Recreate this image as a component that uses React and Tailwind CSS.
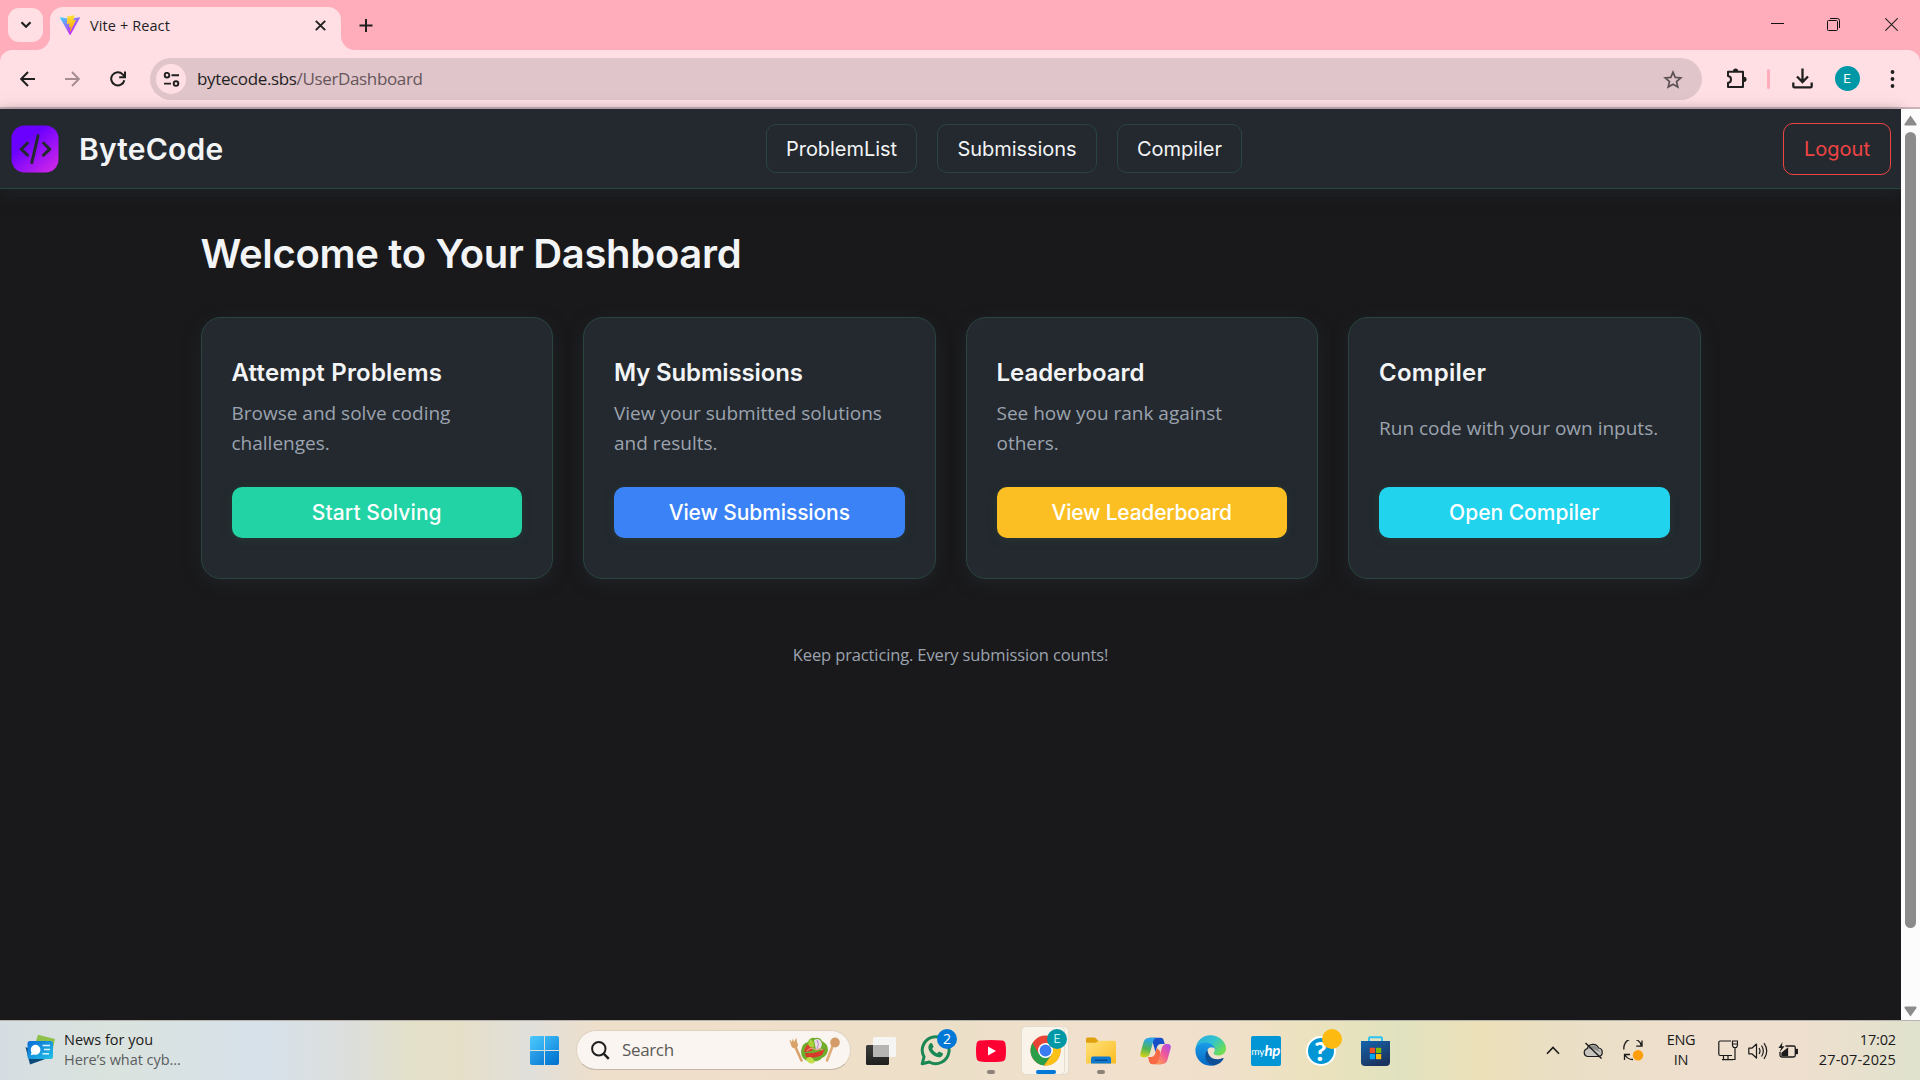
import React from "react";

const UI = "font-['Open_Sans','Noto_Sans',sans-serif]";
const HEAD = "font-['Inter','Open_Sans',sans-serif]";

const navLinks = [
  { label: "ProblemList", cls: "w-[151px]" },
  { label: "Submissions", cls: "w-[160px]" },
  { label: "Compiler", cls: "w-[125px]" },
];

const cards = [
  { title: "Attempt Problems", titleCls: "tracking-[0.2px]", lines: ["Browse and solve coding", "challenges."], action: "Start Solving", color: "bg-[#22d3a5] tracking-[0.1px]" },
  { title: "My Submissions", titleCls: "tracking-[-0.15px]", lines: ["View your submitted solutions", "and results."], action: "View Submissions", color: "bg-[#3b82f6] tracking-[-0.1px]" },
  { title: "Leaderboard", titleCls: "tracking-[-0.05px]", lines: ["See how you rank against", "others."], action: "View Leaderboard", color: "bg-[#fbbf24] tracking-[-0.22px]" },
  { title: "Compiler", titleCls: "tracking-[0.25px]", lines: ["Run code with your own inputs."], action: "Open Compiler", color: "bg-[#22d3ee]" },
];

function ViteIcon() {
  return (
    <svg width="20" height="20" viewBox="0 0 256 257">
      <defs>
        <linearGradient id="va" x1="-.8%" x2="57.6%" y1="7.7%" y2="78.4%"><stop offset="0" stopColor="#41D1FF" /><stop offset="1" stopColor="#BD34FE" /></linearGradient>
        <linearGradient id="vb" x1="43.4%" x2="50.3%" y1="2.2%" y2="89%"><stop offset="0" stopColor="#FFEA83" /><stop offset=".083" stopColor="#FFDD35" /><stop offset="1" stopColor="#FFA800" /></linearGradient>
      </defs>
      <path fill="url(#va)" d="M255.153 37.938L134.897 252.976c-2.483 4.44-8.862 4.466-11.382.048L.875 37.958c-2.746-4.814 1.371-10.646 6.827-9.67l120.385 21.517a6.537 6.537 0 0 0 2.322-.004l117.867-21.483c5.438-.991 9.574 4.796 6.877 9.62Z" />
      <path fill="url(#vb)" d="M185.432.063L96.44 17.501a3.268 3.268 0 0 0-2.634 3.014l-5.474 92.456a3.268 3.268 0 0 0 3.997 3.378l24.777-5.718c2.318-.535 4.413 1.507 3.936 3.838l-7.361 36.047c-.495 2.426 1.782 4.5 4.151 3.78l15.304-4.649c2.372-.72 4.652 1.36 4.15 3.788l-11.698 56.621c-.732 3.542 3.979 5.473 5.943 2.437l1.313-2.028l72.516-144.72c1.215-2.423-.88-5.186-3.54-4.672l-25.505 4.922c-2.396.462-4.435-1.77-3.759-4.114l16.646-57.705c.677-2.35-1.37-4.583-3.769-4.113Z" />
    </svg>
  );
}

function TabStrip() {
  return (
    <div className="flex h-[50px] bg-[#ffadbb] pl-2">
      <button className="mt-2 flex h-[34px] w-[35px] items-center justify-center rounded-[11px] bg-[#ffdfe4]">
        <svg width="12" height="8" viewBox="0 0 12 8" fill="none" stroke="#1f1f1f" strokeWidth="2.2"><path d="M1.5 1.2 6 5.7l4.5-4.5" /></svg>
      </button>
      <svg className="ml-[-7px] mt-[36px] shrink-0" width="14" height="14"><path d="M0 14A14 14 0 0 0 14 0V14Z" fill="#ffdfe4" /></svg>
      <div className="mt-[7px] flex h-[43px] w-[291px] items-start rounded-t-[13px] bg-[#ffdfe4] pl-[10px] pt-2">
        <ViteIcon />
        <span className={`${UI} ml-[10px] mt-[1px] h-5 text-[14.5px] leading-[20px] tracking-[0.1px] text-[#1f1f1f]`}>Vite + React</span>
        <svg className="ml-auto mr-[15px] mt-[5px]" width="11" height="11" viewBox="0 0 11 11" stroke="#1f1f1f" strokeWidth="1.9"><path d="m.8.8 9.4 9.4M10.2.8.8 10.2" /></svg>
      </div>
      <svg className="mt-[36px] shrink-0" width="14" height="14"><path d="M0 0A14 14 0 0 0 14 14H0Z" fill="#ffdfe4" /></svg>
      <svg className="ml-[4px] mt-[19px] shrink-0" width="14" height="13" viewBox="0 0 14 13" stroke="#1f1f1f" strokeWidth="2"><path d="M7 0v13M.5 6.5h13" /></svg>
      <div className="ml-auto mt-[18px] flex pr-[22px]">
        <svg width="13" height="13" viewBox="0 0 13 13" stroke="#111"><path d="M0 5.5h13" /></svg>
        <svg className="ml-[43px]" width="13" height="13" viewBox="0 0 13 13" fill="none" stroke="#111"><rect x=".5" y="2.5" width="10" height="10" rx="1" /><path d="M3 .5h7.5a2 2 0 0 1 2 2V10" /></svg>
        <svg className="ml-[45px]" width="13" height="13" viewBox="0 0 13 13" stroke="#222" strokeWidth="1.1"><path d="m.3.3 12.4 12.4M12.7.3.3 12.7" /></svg>
      </div>
    </div>
  );
}

function Toolbar() {
  return (
    <div className="h-[57px] bg-[#ffadbb]">
      <div className="flex h-[57px] items-center rounded-t-[12px] bg-[#ffdfe4] pl-5">
        <svg width="15" height="16" viewBox="0 0 15 16" fill="none" stroke="#1f1f1f" strokeWidth="2"><path d="M15 8H1.5M8 1 1.2 8 8 15" /></svg>
        <svg className="ml-[30px]" width="15" height="16" viewBox="0 0 15 16" fill="none" stroke="#a58d92" strokeWidth="1.9"><path d="M0 8h13.5M7 1l6.8 7L7 15" /></svg>
        <svg className="ml-[30px]" width="16" height="16" viewBox="0 0 16 16" fill="none" stroke="#1f1f1f" strokeWidth="2"><path d="M14.3 9.2A6.6 6.600 0 1 1 12.700 3.400L14.600 5.600" /><path d="M15 .4v5.900H9.200" /></svg>
        <div className="ml-[24px] mt-[1px] flex h-[42px] w-[1552px] items-center rounded-full bg-[#e0c5ca] pl-[6px] pr-[19px]">
          <div className="flex size-[30px] items-center justify-center rounded-full bg-[#ffdfe4]">
            <svg width="17" height="15" viewBox="0 0 17 15" fill="none" stroke="#1f1f1f" strokeWidth="1.9"><circle cx="4" cy="3.2" r="2.3" /><path d="M8.500 3.200H16M1 11.600H8" /><circle cx="13" cy="11.600" r="2.300" /></svg>
          </div>
          <span className={`${UI} ml-[11px] text-[17px] leading-[24px] tracking-[-0.36px] text-[#1f1f1f]`}>bytecode.sbs<span className="text-[#66565a]">/UserDashboard</span></span>
          <svg className="ml-auto" width="20" height="19" viewBox="0 0 20 19" fill="none" stroke="#5d5255" strokeWidth="1.700"><path d="m10 2.200 2.200 5.200 5.600.5-4.300 3.700 1.300 5.500-4.800-2.900-4.800 2.900 1.300-5.500L2.200 7.900l5.600-.5Z" /></svg>
        </div>
        <svg className="ml-[24px]" width="21" height="21" viewBox="0 0 21 21" fill="none" stroke="#1f1f1f" strokeWidth="2"><path d="M2 3.800h15v15.200H2v-4.200c4-.3 4-6.500 0-6.800Z" strokeLinejoin="round" /><path d="M7 3a2.600 2.600 0 0 1 5.200 0ZM18 8.700a2.600 2.600 0 0 1 0 5.200Z" fill="#1f1f1f" stroke="none" /></svg>
        <div className="ml-[20px] h-5 w-[2.5px] rounded bg-[#ffadbb]" />
        <svg className="ml-[22px]" width="21" height="21" viewBox="0 0 21 21" fill="none" stroke="#1f1f1f" strokeWidth="2.300"><path d="M10.500.5v13M5 8.500l5.500 5.500L16 8.500M1.300 14.500v3.700q0 1.200 1.200 1.200h16q1.200 0 1.200-1.200v-3.700" /></svg>
        <div className="ml-[22px] flex size-[25px] items-center justify-center rounded-full bg-[#0097a7] font-['Roboto',sans-serif] text-[13px] text-white">E</div>
        <svg className="ml-[30px]" width="5" height="18" viewBox="0 0 5 18" fill="#1f1f1f"><circle cx="2.500" cy="2" r="1.900" /><circle cx="2.500" cy="9" r="1.900" /><circle cx="2.500" cy="16" r="1.900" /></svg>
      </div>
    </div>
  );
}

function SiteNav() {
  return (
    <nav className="flex h-[80px] shrink-0 items-center border-b border-[#294540] bg-[#23292e] pl-[11px] pr-[10px] shadow-[0_4px_14px_rgba(35,41,46,0.6)]">
      <div className="flex w-[755px] shrink-0 items-center">
        <svg width="48" height="48" viewBox="0 0 48 48" fill="none">
          <defs><linearGradient id="lg" x1="8" y1="4" x2="44" y2="46" gradientUnits="userSpaceOnUse"><stop offset=".25" stopColor="#6a00ff" /><stop offset="1" stopColor="#d226e8" /></linearGradient></defs>
          <rect x=".500" y=".500" width="47" height="47" rx="13" fill="url(#lg)" />
          <path d="m16.500 18-6.300 6.200 6.300 6M32.500 18l6.300 6.200-6.300 6M27 10.800l-6.200 26.800" stroke="#23292e" strokeWidth="3" strokeLinecap="round" strokeLinejoin="round" />
        </svg>
        <span className={`${HEAD} ml-[20px] text-[30px] font-semibold leading-[40px] tracking-[0.2px] text-[#f3f4f6]`}>ByteCode</span>
      </div>
      <div className="flex shrink-0 gap-[20px]">
        {navLinks.map((l) => (
          <a key={l.label} className={`${HEAD} ${l.cls} flex h-[49px] items-center justify-center rounded-[10px] border border-[#294540] text-[20px] tracking-[-0.05px] text-[#f3f4f6]`}>{l.label}</a>
        ))}
      </div>
      <a className={`${HEAD} ml-auto flex h-[52px] w-[108px] items-center justify-center rounded-[10px] border border-[#ef4444] text-[20px] text-[#ef4444]`}>Logout</a>
    </nav>
  );
}

function Card({ card }) {
  return (
    <div className="flex h-[262px] flex-col rounded-[20px] border border-[#294540] bg-[#23292e] px-[30px] shadow-[0_4px_16px_rgba(35,41,46,0.6)]">
      <h2 className={`${HEAD} ${card.titleCls} mt-[39px] text-[24px] font-semibold leading-[32px] text-[#f3f4f6]`}>{card.title}</h2>
      <div className={`${UI} mt-[9px] flex h-[60px] flex-col justify-center text-[19px] leading-[30px] text-[#9ca3af]`}>
        {card.lines.map((l) => <p key={l} className="whitespace-nowrap">{l}</p>)}
      </div>
      <button className={`${HEAD} ${card.color} mt-[29px] h-[51px] shrink-0 rounded-[10px] text-[21px] font-medium text-white shadow-[0_2px_8px_rgba(41,69,64,0.5)]`}>{card.action}</button>
    </div>
  );
}

function Scrollbar() {
  return (
    <div className="flex w-[19px] flex-col items-center bg-[#fcfcfc]">
      <svg className="mt-[6px]" width="13" height="11"><path d="M6.500.5 12.500 9q.3 1.500-1 1.500h-10Q0 10.500.5 9Z" fill="#8b8b8b" /></svg>
      <div className="mt-[6px] h-[796px] w-[11px] rounded-full bg-[#8b8b8b]" />
      <svg className="mb-[3px] mt-auto" width="13" height="11"><path d="M6.500 10.500 12.500 2q.3-1.500-1-1.500h-10Q0 .5.500 2Z" fill="#8b8b8b" /></svg>
    </div>
  );
}

function Slot({ children, dot }) {
  return (
    <div className="relative flex h-full w-[55px] items-center justify-center">
      {children}
      {dot && <span className="absolute bottom-[6px] h-[4px] w-[8px] rounded-full bg-[#8b8378]" />}
    </div>
  );
}

function TaskIcons() {
  return (
    <div className="ml-[2px] flex h-full">
      <Slot>
        <svg width="30" height="28" viewBox="0 0 30 28"><defs><linearGradient id="tv" x1="0" y1="0" x2="0" y2="1"><stop stopColor="#3c3c3a" /><stop offset="1" stopColor="#1f1f1f" /></linearGradient></defs><rect y="8" width="23" height="20" rx="1.500" fill="url(#tv)" /><rect x="7" y="0" width="23" height="20" rx="1.500" fill="#f5f5f5" fillOpacity=".95" /><path d="M7 8h16v12H8.500Q7 20 7 18.500Z" fill="#b6b5b4" /></svg>
      </Slot>
      <Slot>
        <svg width="31" height="31" viewBox="0 0 31 31" fill="none"><path d="M2.200 28.800 4 21.800A13.400 13.400 0 1 1 9.300 27Z" stroke="#1a8755" strokeWidth="3" strokeLinejoin="round" /><path d="M10.200 8.300c.7-.7 1.700-.5 2.100.4l1.100 2.500c.2.600 0 1-.3 1.400l-.9 1.100c1 2.100 2.700 3.700 5 4.700l1.100-1.300c.4-.5.9-.5 1.400-.3l2.500 1.200c.7.400.9.900.6 1.800-.5 1.900-2.600 2.800-4.400 2.500-5.300-.9-9.400-5-10-9.200-.2-1.800.6-3.600 1.800-4.800Z" fill="#1a8755" /></svg>
        <span className={`${UI} absolute right-[6px] top-[8px] flex size-[20px] items-center justify-center rounded-full bg-[#0078d7] text-[14px] leading-none text-white`}>2</span>
      </Slot>
      <Slot dot>
        <svg width="30" height="22" viewBox="0 0 30 22"><path d="M4 .6Q15-.5 26 .6 29 1 29.500 4q1 7 0 14-.5 3-3.500 3.400-11 1.100-22 0Q1 21 .5 18q-1-7 0-14Q1 1 4 .6Z" fill="#ff0033" /><path d="m12 6.500 8 4.500-8 4.500Z" fill="#fff" /></svg>
      </Slot>
      <Slot>
        <div className="absolute left-[3px] top-[5px] h-[49px] w-[48px] rounded-[5px] border border-[#e4dccf] bg-[#f8f1e6]" />
        <div className="absolute left-[3px] top-[5px] h-[49px] w-[44px] rounded-[5px] border border-[#e4dccf] bg-[#f9f3e9]" />
        <svg className="relative" width="31" height="31" viewBox="0 0 31 31"><circle cx="15.500" cy="15.500" r="15" fill="#ea4335" /><path d="M2.500 8A15 15 0 0 0 14 30.450L22 19.300H9Z" fill="#2b9e48" /><path d="M14 30.450A15 15 0 0 0 28.500 8H15.500l6.500 11.300Z" fill="#fbc116" /><circle cx="15.500" cy="15.500" r="7.500" fill="#fff" /><circle cx="15.500" cy="15.500" r="5.900" fill="#3a7df0" /></svg>
        <span className="absolute left-[29px] top-[8px] flex size-[20px] items-center justify-center rounded-full bg-[#0097a7] font-['Roboto',sans-serif] text-[12px] leading-none text-[#c4f0ef]">E</span>
        <span className="absolute bottom-[6px] left-[18px] h-[4px] w-[20px] rounded-full bg-[#0078d7]" />
      </Slot>
      <Slot dot>
        <svg width="30" height="27" viewBox="0 0 30 27"><defs><linearGradient id="fo" x1="0" y1="0" x2="1" y2="1"><stop stopColor="#ffe07a" /><stop offset="1" stopColor="#fbbd23" /></linearGradient></defs><path d="M0 2Q0 .5 1.500.5H9L12.500 4V9H0Z" fill="#dfa10c" /><path d="M0 5.800h9.500L13 3.800H28.500q1.500 0 1.500 1.500V26.500H0Z" fill="url(#fo)" /><path d="M5 26.500V21.500Q5 19.500 7 19.500H23q2 0 2 2v5Z" fill="#0f79d0" /><rect x="8.500" y="22.500" width="13" height="1.500" rx=".7" fill="#0a4f90" /></svg>
      </Slot>
      <Slot>
        <svg width="31" height="28" viewBox="0 0 31 28"><defs><linearGradient id="c1" x1=".2" y1="0" x2="0" y2="1"><stop stopColor="#2aa5ec" /><stop offset=".5" stopColor="#52b455" /><stop offset="1" stopColor="#e6d510" /></linearGradient><linearGradient id="c2" x1="1" y1="0" x2=".2" y2="1"><stop stopColor="#a74bf0" /><stop offset=".5" stopColor="#ee569a" /><stop offset="1" stopColor="#ff9a55" /></linearGradient></defs><path d="M10 .8H21q1.800 0 2.400 1.800L24.800 7H21q-3 0-4 3l-1.500 5L12 3Z" fill="#174fc8" /><path d="M21 27.300H12.500q-2.500 0-3.200-2.300L8 20h3q3 0 4-3l2-6 3 3Z" fill="#f86a45" /><path d="M10 .8h6q-2 .8-2.700 3.300L10 16q-1 4-4.500 4.200H3Q-.5 20 .500 16L3.600 5Q5 .8 10 .8Z" fill="url(#c1)" /><path d="M21 27.300h-5.500q2-.8 2.700-3.300L21.500 12q1-4.500 4.500-5h2q3.500.5 2.600 4.500L27.400 23Q26 27.300 21 27.300Z" fill="url(#c2)" /></svg>
      </Slot>
      <Slot>
        <svg width="31" height="31" viewBox="0 0 31 31"><defs><linearGradient id="e1" x1="0" y1="0" x2="1" y2=".6"><stop stopColor="#2aa8e0" /><stop offset=".55" stopColor="#32c3cf" /><stop offset="1" stopColor="#6ede53" /></linearGradient><linearGradient id="e2" x1="0" y1="0" x2="0" y2="1"><stop stopColor="#1c9de8" /><stop offset="1" stopColor="#0668c4" /></linearGradient></defs><path d="M.5 15C1 6 7.500.3 15.500.3 24.500.3 31 7 31 13.500c0 4-3 7-7.500 7-3.500 0-5-1.200-5-2.200 0-.8 1.300-1.500 1.300-3.500C19.800 11 15 9 11 9 5 9 1.500 12 .5 15Z" fill="url(#e1)" /><path d="M.4 15.500C.5 10.500 5 7.500 10 7.500c6 0 9.800 3.600 9.800 7.300 0-2-4.500-4.300-7.300 0C9 20 12 29 20 30 9 33 .4 25 .4 15.500Z" fill="url(#e2)" /><path d="M12.500 14.800C8 20 11 29 18 30.500c5-.2 9-3.500 10.500-6.700.4-.8-.2-1-.8-.7-6.500 3-14.700.5-15.200-8.300Z" fill="#0f4f96" /></svg>
      </Slot>
      <Slot>
        <div className="flex h-[30px] w-[30px] items-center justify-center rounded-[2px] bg-[#0096d6] font-['Lato',sans-serif] leading-none text-white"><span className="text-[10px]">my</span><span className="text-[15px] font-bold italic tracking-[-0.5px]">hp</span></div>
      </Slot>
      <Slot>
        <div className="flex size-[30px] items-center justify-center rounded-full border-2 border-white bg-[#0096d6] font-['Lato',sans-serif] text-[27px] font-black leading-none text-white">?</div>
        <span className="absolute left-[29px] top-[8px] size-[20px] rounded-full bg-[#fdbb12]" />
      </Slot>
      <Slot>
        <svg width="29" height="30" viewBox="0 0 29 30"><defs><linearGradient id="st" x1="0" y1="0" x2="0.5" y2="1"><stop stopColor="#1564ae" /><stop offset="1" stopColor="#1b345f" /></linearGradient></defs><path d="M8 6V2.500Q8 1.300 9.200 1.300H19.800Q21 1.300 21 2.500V6" stroke="#2cc3f2" strokeWidth="2" fill="none" /><path d="M0 5H29V26q0 4-4 4H4q-4 0-4-4Z" fill="url(#st)" /><path d="M8.800 11.800h5.200V17H8.800Z" fill="#f25022" /><path d="M15 11.800h5.200V17H15Z" fill="#7fba00" /><path d="M8.800 18h5.200v5.200H8.800Z" fill="#00a4ef" /><path d="M15 18h5.200v5.200H15Z" fill="#ffb900" /></svg>
      </Slot>
    </div>
  );
}

function Salad() {
  return (
    <svg width="51" height="27" viewBox="0 0 51 27">
      <path d="M5.500 8 12.500 23.500" stroke="#d9a26b" strokeWidth="2.600" strokeLinecap="round" /><path d="M.5 3q2-.5 2 2.500L4 1.500l1 3.500L7.500.8 8 5q2.500 4-1 6-4 1-5-3Z" fill="#d9a26b" />
      <path d="M44 8 38 23.500" stroke="#e0ac77" strokeWidth="2.600" strokeLinecap="round" /><ellipse cx="46" cy="5.500" rx="4.800" ry="5" fill="#d39c68" />
      <path d="M12 14q1-8 7-9 2-5 7-4 5-1 7 3 6 3 6 9-1 6-6 8-3 4-7 3-3 4-7 0-7-2-7-10Z" fill="#6fae2b" />
      <path d="M15 15q1-9 9-9l-1 8Z" fill="#de4030" /><path d="M17 20q9 2 16-2l3-6q-9 5-20 4Z" fill="#d83a2b" /><path d="M25 3q6-3 8 4-1 6-6 6Z" fill="#eadbe8" /><path d="M28 3q3 4 0 9" stroke="#b78ac0" fill="none" /><path d="M17 22q5-5 9 3-4 3-7 0Z" fill="#c1de48" /><path d="M21 2q5 2 4 8-4 2-6-3Z" fill="#a9d13a" /><path d="M18 14q4-5 9-1 4-3 7 0" stroke="#f5a08a" fill="none" />
    </svg>
  );
}

function Taskbar() {
  return (
    <div className="flex h-[60px] items-center border-t border-[#b9b3ad] bg-[linear-gradient(90deg,#d5dde2_0px,#dbe3de_110px,#d6e1ea_260px,#dcdedc_350px,#e3e0c9_410px,#e5dfc8_460px,#e1dfdb_530px,#eedfca_600px,#f0dfca_750px,#ecdfc8_960px,#f0e0cd_1080px,#f0e0cb_1220px,#ebe2bd_1320px,#e0e2bf_1400px,#ece0b8_1480px,#eadfc5_1560px,#eedfce_1690px,#efdfce_1800px,#dfe2cd_1920px)]">
      <div className="flex w-[530px] shrink-0 items-center pl-[25px]">
        <svg className="mt-[-2px]" width="30" height="31" viewBox="0 0 30 31"><defs><linearGradient id="nw" x1="0" y1="0" x2="1" y2="1"><stop stopColor="#0a6bd6" /><stop offset="1" stopColor="#22c1e6" /></linearGradient></defs><path d="M13 .8 30 5 28 14 10 10Z" fill="#8fc14a" /><path d="M.5 13 5 30.500 23 24Z" fill="#0b4a78" /><rect x="2.500" y="7" width="25.500" height="18" rx="2.500" fill="url(#nw)" /><path d="M10.500 10.800a5 5 0 1 1-2 9.600l-2.700.8.700-2.800a5 5 0 0 1 4-7.600Z" fill="#fff" /><path d="M17.500 11.500H25M19 15.500h6M17.500 19.800H24" stroke="#d8f4ff" strokeWidth="1.500" /></svg>
        <div className={`${UI} ml-[9px] mt-[-2px] text-[14.5px] leading-[20px]`}>
          <p className="text-[#1a1a1a]">News for you</p>
          <p className="tracking-[-0.05px] text-[#5a5d5e]">Here’s what cyb...</p>
        </div>
      </div>
      <div className="grid size-[29px] shrink-0 grid-cols-2 gap-[1px] overflow-hidden rounded-[2px]">
        <i className="bg-linear-to-br from-[#4cc8fb] to-[#2aa8ee]" /><i className="bg-linear-to-br from-[#3bb6f3] to-[#1690e2]" /><i className="bg-linear-to-br from-[#2fa4ea] to-[#0c80d8]" /><i className="bg-linear-to-br from-[#1690e0] to-[#0270cf]" />
      </div>
      <div className="ml-[17px] mt-[-1px] flex h-[40px] w-[275px] shrink-0 items-center rounded-full border border-[#e0d2c1] border-b-[#c5b6a8] bg-[#faf5f0] pl-[14px] pr-[10px]">
        <svg width="19" height="19" viewBox="0 0 19 19" fill="none" stroke="#1f1f1f"><circle cx="7.800" cy="7.800" r="6.700" strokeWidth="2" /><path d="m12.600 12.600 5.200 5.200" strokeWidth="2.400" /></svg>
        <span className={`${UI} ml-[12px] text-[17px] tracking-[-0.35px] text-[#5c5a57]`}>Search</span>
        <span className="ml-auto"><Salad /></span>
      </div>
      <TaskIcons />
      <div className="ml-auto flex items-center pr-[24px] text-[#1a1a1a]">
        <svg width="14" height="9" viewBox="0 0 14 9" fill="none" stroke="#1a1a1a" strokeWidth="1.600"><path d="M1 7.800 7 1.500l6 6.300" /></svg>
        <svg className="ml-[23px]" width="20" height="17" viewBox="0 0 20 17"><path d="M4.500 14.500a4 4 0 0 1-.3-7.800A6 6 0 0 1 15.500 6a4.300 4.300 0 0 1 .2 8.500Z" fill="#c7c4bf" stroke="#1a1a1a" strokeWidth="1.200" /><path d="M5 7A5.500 5.500 0 0 1 15 7l3 4Q9 5 5 7Z" fill="#8e8c88" /><path d="m2.500 1 16 15.500" stroke="#1a1a1a" strokeWidth="1.400" /></svg>
        <svg className="ml-[20px]" width="21" height="21" viewBox="0 0 21 21" fill="none" stroke="#1a1a1a" strokeWidth="1.300"><path d="M1 9.500A8.800 8.800 0 0 1 18.500 6M19 .5v5.700h-5.800M10 19.500A9 9 0 0 1 2 15M1.500 20v-5.500H7" /><circle cx="15" cy="15.200" r="5.200" fill="#ff9d0a" stroke="none" /></svg>
        <div className={`${UI} ml-[22px] mt-[-2px] w-[30px] text-center text-[14.5px] leading-[20px] tracking-[-0.3px]`}><p>ENG</p><p>IN</p></div>
        <svg className="ml-[22px]" width="20" height="21" viewBox="0 0 20 21" fill="none" stroke="#1a1a1a" strokeWidth="1.200"><path d="M13 1H2.200Q.8 1 .8 2.500V14Q.8 15.500 2.200 15.500H14M5.500 15.500v4M10 15.500v4M4 19.600h11M14.500 1h5v4.500l-1 2h-3l-1-2ZM17 8v11.500h-2.500M14.500 4h5" /></svg>
        <svg className="ml-[10px]" width="20" height="18" viewBox="0 0 20 18" fill="none" stroke="#1a1a1a" strokeWidth="1.200"><path d="M.8 6.200v5.600h3L8.500 16V2L3.800 6.200Z" strokeLinejoin="round" /><path d="M11 6q2 3 0 6M13.500 3.500q3.700 5.500 0 11M16 1.200q5.500 7.800 0 15.600" /></svg>
        <svg className="ml-[10px]" width="20" height="17" viewBox="0 0 20 17" fill="none" stroke="#1a1a1a" strokeWidth="1.300"><path d="M7.500 4H15.500Q17.300 4 17.300 5.800v7.400q0 1.800-1.800 1.800H3.800Q2 15 2 13.200V10" /><path d="M18 7.500h1.300v4H18Z" fill="#1a1a1a" /><path d="M4 13.300V11L9.500 6.500v6.800Z" fill="#1a1a1a" /><path d="M4.500 0 .5 6h2.700L1.500 10.500 6.500 4.300H3.800Z" fill="#1a1a1a" stroke="none" /></svg>
        <div className={`${UI} ml-[20px] mt-[-2px] w-[78px] whitespace-nowrap text-right text-[14.5px] leading-[20px]`}><p className="tracking-[-0.15px]">17:02</p><p className="tracking-[0.15px]">27-07-2025</p></div>
      </div>
    </div>
  );
}

export default function App() {
  return (
    <div className="flex h-[1080px] w-[1920px] flex-col overflow-hidden bg-[#19191b]">
      <TabStrip />
      <Toolbar />
      <div className="h-[2px] bg-[#ceb3b9]" />
      <div className="flex h-[911px]">
        <div className="flex w-[1901px] flex-col">
          <SiteNav />
          <main className="flex flex-1 flex-col px-[200.5px]">
            <h1 className={`${HEAD} mt-[40px] text-[40px] font-semibold leading-[50px] tracking-[-0.32px] text-[#f3f4f6]`}>Welcome to Your Dashboard</h1>
            <div className="mt-[38px] grid grid-cols-4 gap-[30px]">{cards.map((c) => <Card key={c.title} card={c} />)}</div>
            <p className={`${UI} mt-[63px] text-center text-[16.5px] leading-[25px] tracking-[-0.13px] text-[#9ca3af]`}>Keep practicing. Every submission counts!</p>
          </main>
        </div>
        <Scrollbar />
      </div>
      <Taskbar />
    </div>
  );
}
